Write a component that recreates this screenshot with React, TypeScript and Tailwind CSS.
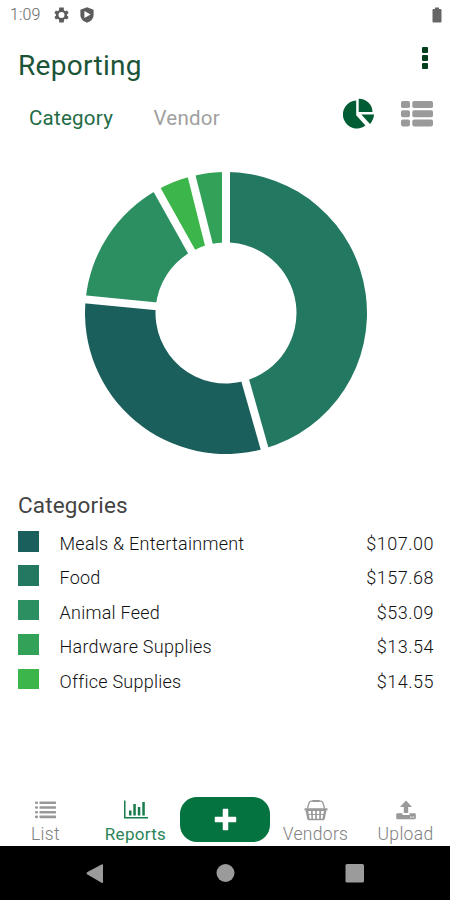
import React from "react";

type Category = { name: string; amount: number; color: string };

const categories: Category[] = [
  { name: "Meals & Entertainment", amount: 107.0, color: "#1b5f5c" },
  { name: "Food", amount: 157.68, color: "#237862" },
  { name: "Animal Feed", amount: 53.09, color: "#2b8f62" },
  { name: "Hardware Supplies", amount: 13.54, color: "#31a258" },
  { name: "Office Supplies", amount: 14.55, color: "#3cb54a" },
];

const sliceOrder = [1, 0, 2, 4, 3];
const OUTER = 141;
const INNER = 70.5;

function point(r: number, a: number) {
  return `${(r * Math.sin(a)).toFixed(2)} ${(-r * Math.cos(a)).toFixed(2)}`;
}

function Donut() {
  const total = categories.reduce((s, c) => s + c.amount, 0);
  let angle = 0;
  const slices = sliceOrder.map((i) => {
    const start = angle;
    angle += (categories[i].amount / total) * Math.PI * 2;
    return { start, end: angle, color: categories[i].color };
  });
  return (
    <svg width="284" height="284" viewBox="-142 -142 284 284">
      {slices.map((s) => (
        <path
          key={s.color}
          fill={s.color}
          d={`M${point(OUTER, s.start)}A${OUTER} ${OUTER} 0 0 1 ${point(OUTER, s.end)}L${point(INNER, s.end)}A${INNER} ${INNER} 0 0 0 ${point(INNER, s.start)}Z`}
        />
      ))}
      {slices.map((s) => (
        <path key={s.color} stroke="#fff" strokeWidth="8" d={`M${point(INNER - 4, s.start)}L${point(OUTER + 4, s.start)}`} />
      ))}
    </svg>
  );
}

function StatusBar() {
  return (
    <div className="flex h-[30px] items-center pl-[10px] pr-[8px] text-[#6b6b6b]">
      <span className="w-[44px] text-[16px] leading-none font-light tracking-[0.1px] text-[#666]">1:09</span>
      <svg width="15" height="16" viewBox="2 2 20 20" fill="#5c5c5c">
        <path fillRule="evenodd" d="M19.4 13a7.500 7.500 0 0 0 0-2l2.100-1.600-2-3.500-2.500 1a7.500 7.500 0 0 0-1.700-1L15 2H9l-.4 3.900a7.500 7.500 0 0 0-1.700 1l-2.400-1-2 3.500L4.600 11a7.500 7.500 0 0 0 0 2l-2.100 1.600 2 3.500 2.400-1a7.500 7.500 0 0 0 1.700 1L9 22h6l.4-3.900a7.500 7.500 0 0 0 1.700-1l2.400 1 2-3.500zM12 16a4 4 0 1 1 0-8 4 4 0 0 1 0 8z" />
      </svg>
      <svg className="ml-[11px]" width="14" height="16" viewBox="0 0 14 16">
        <path fill="#5c5c5c" d="M7 .3 13.600 2.700v5.100c0 3.800-2.700 6.700-6.600 7.900C3.100 14.500.4 11.600.4 7.800V2.700z" />
        <path fill="#fff" d="M4.400 4v7L10.600 7.500z" />
      </svg>
      <svg className="ml-auto" width="10" height="16" viewBox="0 0 10 16" fill="#666">
        <path d="M3 .5h4V2h1.500q1 0 1 1v11.500q0 1-1 1h-7q-1 0-1-1V3q0-1 1-1H3z" />
      </svg>
    </div>
  );
}

function PieIcon() {
  return (
    <svg width="32" height="32" viewBox="0 0 32 32" fill="#005c32">
      <path d="M13.200 2.500V17.200L22.400 27.600A14 14 0 1 1 13.200 2.500z" />
      <path d="M15.700 .7A13.500 13.500 0 0 1 29.500 14.100H15.700z" />
      <path d="M18.300 16.500H31Q30.800 21.500 27 25.900z" />
    </svg>
  );
}

function TableIcon() {
  return (
    <svg width="32" height="26" viewBox="0 0 32 26" fill="#9a9a9a">
      {[0, 9.2, 18.4].map((y) => (
        <g key={y}>
          <rect x="0" y={y} width="9" height="7" rx="1.800" />
          <rect x="11.300" y={y} width="20.700" height="7" rx="1.800" />
        </g>
      ))}
    </svg>
  );
}

function ListIcon() {
  return (
    <svg width="21" height="18" viewBox="0 0 21 18" fill="#999">
      {[0.5, 5.2, 9.9, 14.6].map((y) => (
        <g key={y}>
          <rect x="0" y={y} width="3" height="2.600" rx="1" />
          <rect x="4.500" y={y} width="16.500" height="2.600" rx=".6" />
        </g>
      ))}
    </svg>
  );
}

function BarsIcon() {
  return (
    <svg width="24" height="19" viewBox="0 0 24 19" fill="#197a4b">
      <path d="M0 .5h1.500V17H24v1.500H0zM5 10.500h2.500v5H5zM9.300 4h2.500v11.500H9.300zM13.800 7h2.500v8.500h-2.500zM18.300 2h2.500v13.500h-2.500z" />
    </svg>
  );
}

function BasketIcon() {
  return (
    <svg width="24" height="22" viewBox="0 0 24 22">
      <g fill="none" stroke="#999" strokeWidth="1.300">
        <path d="M3.500 9.500 5 4Q5.600 2.200 7.500 2.200H8.500M20.500 9.500 19 4Q18.400 2.200 16.500 2.200H15.500" />
        <path strokeWidth="2.200" strokeLinecap="round" d="M9 2h6" />
      </g>
      <path
        fill="#999"
        fillRule="evenodd"
        d="M.5 9.300h23v2h-1L20.700 20q-.3 1.300-1.500 1.300H4.800Q3.600 21.300 3.300 20L1.500 11.300h-1zM4.300 12l.4 3H7v-3zm4.500 0v3h2.400v-3zm4.100 0v3h2.400v-3zm4.200 0v3h2.300l.5-3zM5 16l.6 3.700H7.300v-3.700zm3.900 0v3.700h2.300v-3.700zm4 0v3.700h2.300v-3.700zm4 0v3.700h1.600l.6-3.700z"
      />
    </svg>
  );
}

function UploadIcon() {
  return (
    <svg width="20" height="20" viewBox="0 0 20 20" fill="#999">
      <path d="M10 .5 16 7H12.200v6H7.800V7H4z" />
      <path fillRule="evenodd" d="M1.500 13.200H6.500V15h7v-1.800h5q1.300 0 1.300 1.300v3.500q0 1.300-1.300 1.300h-17Q.2 19.300.2 18v-3.500q0-1.300 1.300-1.300zM14.200 16.500v1.200h1.300v-1.200zm2.500 0v1.200H18v-1.200z" />
    </svg>
  );
}

function NavItem({ icon, label, active }: { icon: React.ReactNode; label: string; active?: boolean }) {
  return (
    <div className="flex w-[90px] flex-col items-center pl-px">
      <div className="mt-[2px] flex h-[23px] items-center justify-center">{icon}</div>
      <span className={`mt-[3px] leading-[20px] whitespace-nowrap ${active ? "text-[17px] tracking-[0.3px] text-[#2c8459]" : "text-[17.5px] font-light tracking-[0.3px] text-[#808080]"}`}>{label}</span>
    </div>
  );
}

export default function App() {
  return (
    <div className="flex h-[900px] w-[450px] flex-col overflow-hidden bg-white font-['Roboto',sans-serif] text-[#1c1c1c]">
      <StatusBar />
      <header className="flex h-[64px] justify-between pl-[18px] pr-[22px]">
        <h1 className="mt-[20px] text-[28px] leading-[32px] tracking-[0.3px] text-[#1c5438]">Reporting</h1>
        <div className="mt-[17px] flex flex-col gap-[2px]">
          <i className="size-[6px] rounded-[1px] bg-[#00401c]" />
          <i className="size-[6px] rounded-[1px] bg-[#00401c]" />
          <i className="size-[6px] rounded-[1px] bg-[#00401c]" />
        </div>
      </header>
      <div className="flex h-[48px] items-center pl-[29px] pr-[17px] text-[20.5px] tracking-[0.25px]">
        <span className="w-[124.500px] text-[#236b45]">Category</span>
        <span className="text-[#a0a0a0]">Vendor</span>
        <div className="ml-auto flex items-center gap-[26px] pb-[9px]">
          <PieIcon />
          <TableIcon />
        </div>
      </div>
      <div className="mt-[29px] flex justify-center pl-[2px]">
        <Donut />
      </div>
      <section className="mt-[37px] pl-[18px] pr-[16px]">
        <h2 className="text-[22.5px] leading-[26px] tracking-[0.15px] text-[#444]">Categories</h2>
        <ul className="mt-[13px] font-light">
          {categories.map((c) => (
            <li key={c.name} className="flex h-[34.4px] items-start text-[18px] leading-[26px] tracking-[0.25px] text-[#111]">
              <span className="size-[20.5px] shrink-0" style={{ backgroundColor: c.color }} />
              <span className="ml-[21px]">{c.name}</span>
              <span className="ml-auto tracking-[0.5px]">${c.amount.toFixed(2)}</span>
            </li>
          ))}
        </ul>
      </section>
      <nav className="mt-auto flex h-[50px] shrink-0">
        <NavItem icon={<ListIcon />} label="List" />
        <NavItem icon={<BarsIcon />} label="Reports" active />
        <div className="mt-px flex h-[45px] w-[90px] items-center justify-center rounded-[17px] bg-[#04733f]">
          <svg width="23" height="23" viewBox="0 0 23 23" fill="#fff" stroke="#fff" strokeWidth="1.500" strokeLinejoin="round">
            <path d="M9.500 1.500h4v8h8v4h-8v8h-4v-8h-8v-4h8z" />
          </svg>
        </div>
        <NavItem icon={<BasketIcon />} label="Vendors" />
        <NavItem icon={<UploadIcon />} label="Upload" />
      </nav>
      <footer className="flex h-[54px] shrink-0 items-center bg-black">
        <svg width="450" height="54" viewBox="0 0 450 54" fill="#9b9b9b">
          <path d="M87 26.300 102 18.200q1 0 1 1v17q0 1-1 .8L87 28.200q-1-.8 0-1.900z" />
          <circle cx="225.500" cy="27" r="9" />
          <rect x="345.500" y="18" width="18.500" height="18.500" rx="1.500" />
        </svg>
      </footer>
    </div>
  );
}
